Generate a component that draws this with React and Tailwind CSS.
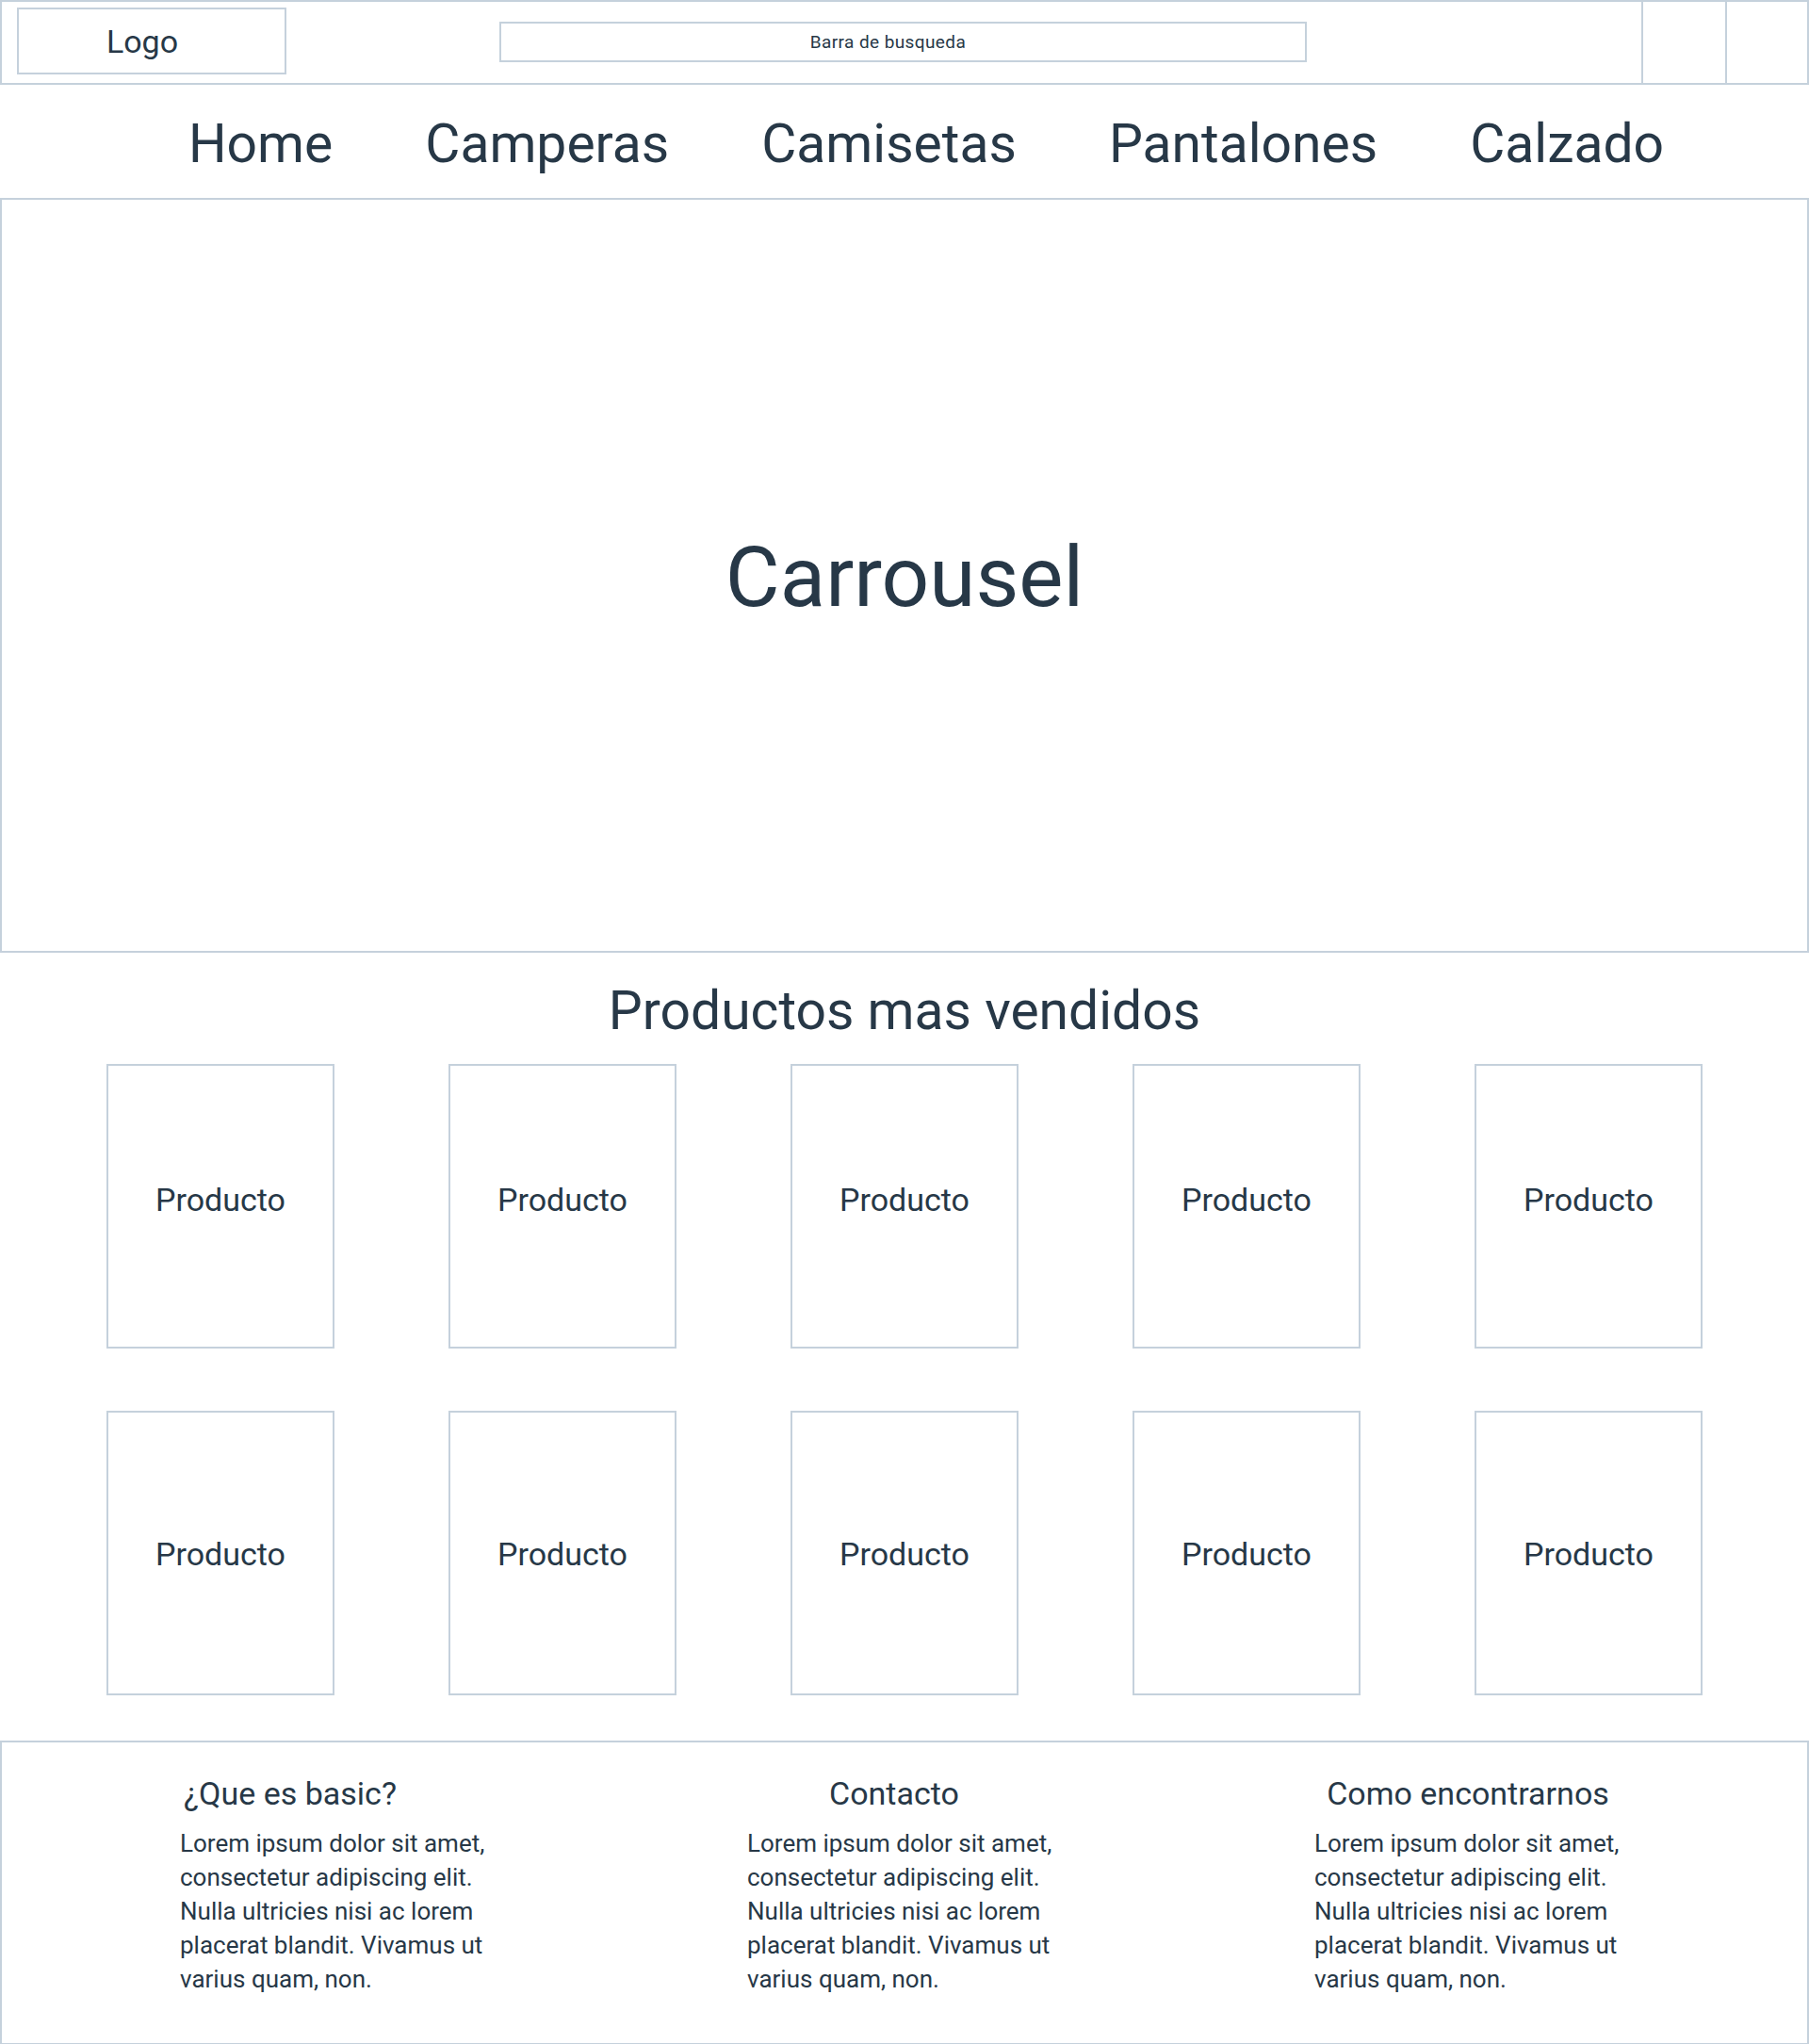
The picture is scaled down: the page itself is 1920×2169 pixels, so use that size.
const navItems = ["Home", "Camperas", "Camisetas", "Pantalones", "Calzado"]

const footerCols = [
    { title: "¿Que es basic?", align: "text-left pl-1" },
    { title: "Contacto", align: "text-center pr-[28px]" },
    { title: "Como encontrarnos", align: "text-center pr-[14px]" },
]

function ProductCard({ raised }) {
    return (
        <div className={`w-[242px] h-[302px] border-2 border-[#c5d1dc] flex items-center justify-center ${raised ? "pb-[14px]" : "pt-[2px]"}`}>
            <span className="text-[34px] leading-none">Producto</span>
        </div>
    )
}

export default function App() {
    return (
        <div className="w-[1920px] min-h-[2169px] bg-white text-[#273847] font-[Roboto,sans-serif]">

            {/* HEADER */}
            <header className="h-[90px] border-2 border-[#c5d1dc] flex items-start">
                <div className="ml-[16px] mt-[6px] w-[286px] h-[71px] border-2 border-[#c5d1dc] flex items-center justify-center pr-[20px]">
                    <span className="text-[34px] leading-none">Logo</span>
                </div>
                <div className="ml-[226px] mt-[21px] w-[857px] h-[43px] border-2 border-[#c5d1dc] flex items-center justify-center pr-[32px]">
                    <span className="text-[19px] tracking-[0.4px] leading-none">Barra de busqueda</span>
                </div>
                <div className="flex-1" />
                <div className="w-[89px] self-stretch border-l-2 border-[#c5d1dc]" />
                <div className="w-[87px] self-stretch border-l-2 border-[#c5d1dc]" />
            </header>

            {/* NAV */}
            <nav className="h-[120px] flex items-center justify-center gap-[98px] pl-[46px] pt-[4px]">
                {navItems.map((item) => (
                    <a key={item} href="#" className="text-[57px] leading-none">{item}</a>
                ))}
            </nav>

            {/* CARROUSEL */}
            <section className="h-[801px] border-2 border-[#c5d1dc] flex items-center justify-center pt-[4px]">
                <h1 className="text-[89px] leading-none">Carrousel</h1>
            </section>

            {/* PRODUCTOS */}
            <section>
                <h2 className="mt-[33px] text-[57px] leading-none text-center">Productos mas vendidos</h2>
                <div className="mt-[28px] grid grid-cols-[repeat(5,242px)] justify-center gap-x-[121px] gap-y-[66px]">
                    {Array.from({ length: 10 }).map((_, i) => (
                        <ProductCard key={i} raised={i < 5} />
                    ))}
                </div>
            </section>

            {/* FOOTER */}
            <footer className="mt-[48px] h-[323px] border-2 border-[#c5d1dc] flex pl-[189px] pt-[34px] gap-[262px]">
                {footerCols.map((col) => (
                    <div key={col.title} className="w-[340px]">
                        <h3 className={`text-[34px] leading-[40px] ${col.align}`}>{col.title}</h3>
                        <p className="mt-[15px] text-[26px] leading-[36px] whitespace-nowrap">
                            Lorem ipsum dolor sit amet,<br />
                            consectetur adipiscing elit.<br />
                            Nulla ultricies nisi ac lorem<br />
                            placerat blandit. Vivamus ut<br />
                            varius quam, non.
                        </p>
                    </div>
                ))}
            </footer>
        </div>
    )
}
